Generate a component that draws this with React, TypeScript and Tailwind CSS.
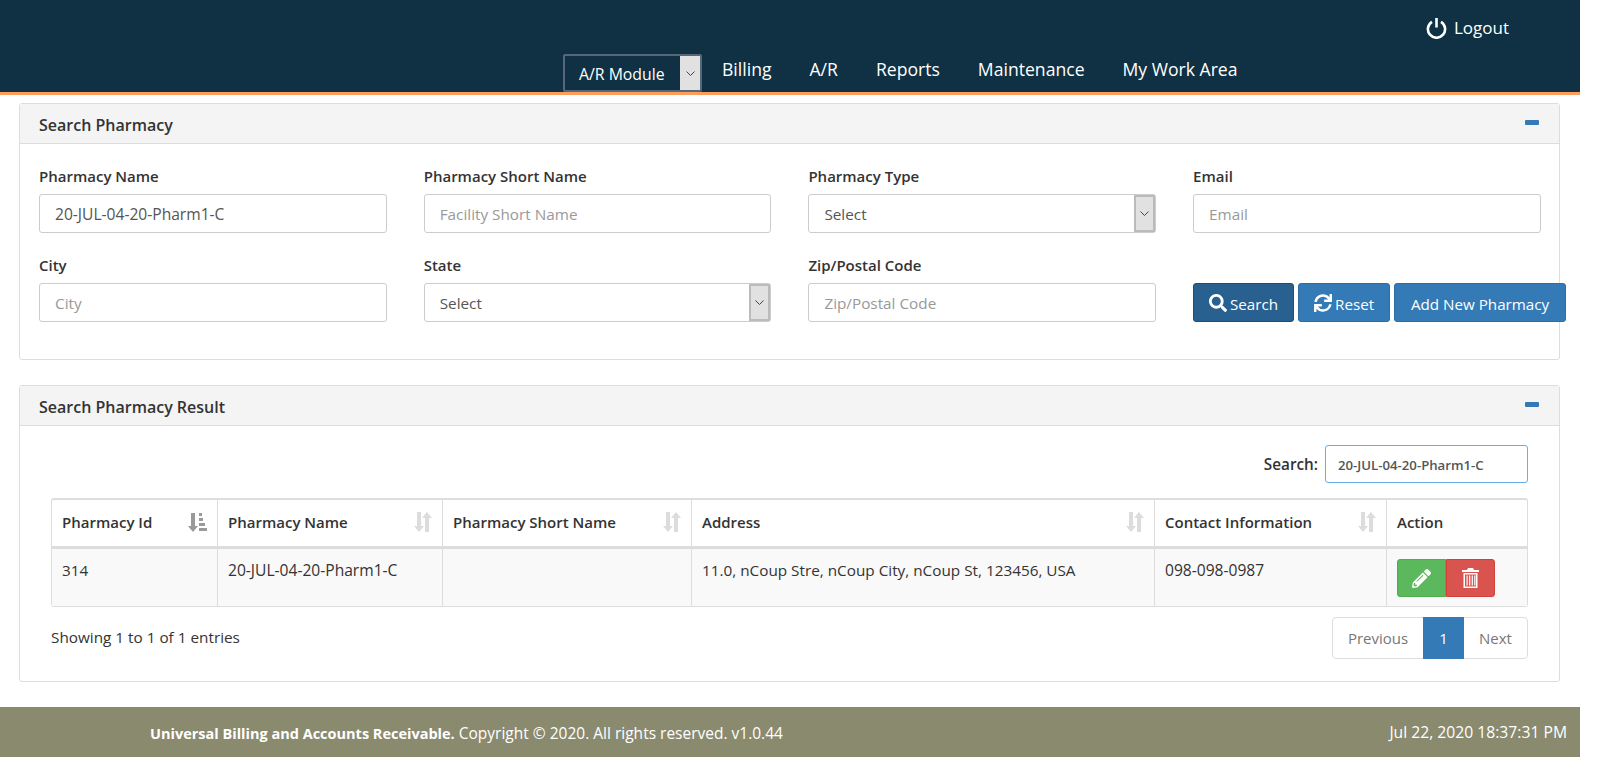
import React from 'react';
import { FaSearch, FaSync, FaPencilAlt } from 'react-icons/fa';

const SortIcon = () => (
  <svg width="18" height="20" viewBox="0 0 18 20" className="shrink-0 text-[#dcdcdc]" fill="currentColor">
    <path d="M3 0h4v14h3l-5 6-5-6h3z" />
    <path d="M11 20h4V6h3l-5-6-5 6h3z" />
  </svg>
);

const SortedIcon = () => (
  <svg width="19" height="19" viewBox="0 0 19 19" className="shrink-0 text-[#9a9a9a]" fill="currentColor">
    <path d="M3 0h4v13h3l-5 6-5-6h3z" />
    <path d="M11 0h3v3h-3zM11 5h4v3h-4zM11 10h6v3h-6zM11 15h8v3h-8z" />
  </svg>
);

const PowerIcon = () => (
  <svg width="21" height="21" viewBox="0 0 21 21" fill="none" stroke="white" strokeWidth="2.6">
    <path d="M6 3.8a8.6 8.6 0 1 0 9 0" />
    <path d="M10.5 0v9.5" />
  </svg>
);

const TrashIcon = () => (
  <svg width="17" height="20" viewBox="0 0 17 20" fill="white">
    <path d="M6 0h5l1 2h5v2H0V2h5z" />
    <path d="M1.5 5h14v15h-14zM3 6.5v12h11v-12z" fillRule="evenodd" />
    <path d="M4.5 7.5h1.2v10H4.5zM7.1 7.5h1.2v10H7.1zM9.7 7.5h1.2v10H9.7zM12.2 7.5h1.2v10h-1.2z" />
  </svg>
);

const Chevron = () => (
  <svg width="9" height="5" viewBox="0 0 9 5" fill="none" stroke="#444" strokeWidth="1">
    <path d="M0.5 0.5l4 4 4-4" />
  </svg>
);

const Field = ({ label, children }: { label: string; children: React.ReactNode }) => (
  <div className="w-[347.5px] shrink-0">
    <label className="block h-[20px] mb-[8px] text-[15px] leading-[20px] font-semibold text-[#333]">{label}</label>
    {children}
  </div>
);

const TextInput = ({ value, placeholder }: { value?: string; placeholder: string }) => (
  <input
    readOnly
    value={value ?? ''}
    placeholder={placeholder}
    className="block w-full h-[39px] px-[15px] pt-[1px] border border-[#ccc] rounded-[3px] bg-white text-[15.6px] text-[#555] placeholder:text-[15.3px] placeholder:text-[#999] outline-none"
  />
);

const SelectBox = () => (
  <div className="flex h-[39px] w-full border border-[#ccc] rounded-[3px] bg-white">
    <span className="flex-1 px-[15px] text-[15.3px] leading-[39px] text-[#555]">Select</span>
    <span className="flex w-[21px] items-center justify-center border-2 border-[#bbb] bg-[#e1e1e1]">
      <Chevron />
    </span>
  </div>
);

const Panel = ({ title, children }: { title: string; children: React.ReactNode }) => (
  <section className="mx-[19px] w-[1541px] border border-[#ddd] rounded-[3px] bg-white">
    <div className="flex h-[40px] items-center justify-between pl-[19px] pr-[20px] bg-[#f4f4f4] border-b border-[#ddd]">
      <h2 className="pt-[3px] text-[16px] font-semibold text-[#333]">{title}</h2>
      <span className="block w-[14px] h-[5px] mb-[3px] bg-[#337ab7] rounded-[1px]" />
    </div>
    {children}
  </section>
);

const columns = [
  { title: 'Pharmacy Id', width: 'w-[165px]', icon: <SortedIcon /> },
  { title: 'Pharmacy Name', width: 'w-[225px]', icon: <SortIcon /> },
  { title: 'Pharmacy Short Name', width: 'w-[249px]', icon: <SortIcon /> },
  { title: 'Address', width: 'w-[463px]', icon: <SortIcon /> },
  { title: 'Contact Information', width: 'w-[232px]', icon: <SortIcon /> },
  { title: 'Action', width: 'w-[141px]', icon: null },
];

export default function App() {
  return (
    <div className="w-[1580px] h-[757px] flex flex-col bg-white font-['Open_Sans',sans-serif] text-[15.3px] text-[#333]">
      <header className="h-[95px] shrink-0 bg-[#0f3143] border-b-[3px] border-[#ff9d5c] text-white">
        <div className="flex h-[54px] items-start justify-end pr-[71px] pt-[14px]">
          <a className="flex items-center gap-[7px] text-[17px] leading-[28px]">
            <PowerIcon />
            Logout
          </a>
        </div>
        <nav className="flex items-start pl-[563px]">
          <div className="flex h-[38px] w-[139px] border-2 border-[#56677a] rounded-[2px] bg-[#0f3143]">
            <span className="flex-1 pl-[14px] text-[15.8px] leading-[36px]">A/R Module</span>
            <span className="flex w-[20px] items-center justify-center bg-[#e1e1e1]">
              <Chevron />
            </span>
          </div>
          <div className="flex gap-[38px] pl-[20px] text-[17.6px] leading-[30px]">
            <a>Billing</a>
            <a>A/R</a>
            <a>Reports</a>
            <a>Maintenance</a>
            <a>My Work Area</a>
          </div>
        </nav>
      </header>

      <main className="flex-1 pt-[8px] flex flex-col gap-[25px]">
        <Panel title="Search Pharmacy">
          <div className="h-[215px] pl-[19px] pt-[22px]">
            <div className="flex gap-[37.2px]">
              <Field label="Pharmacy Name">
                <TextInput value="20-JUL-04-20-Pharm1-C" placeholder="Pharmacy Name" />
              </Field>
              <Field label="Pharmacy Short Name">
                <TextInput placeholder="Facility Short Name" />
              </Field>
              <Field label="Pharmacy Type">
                <SelectBox />
              </Field>
              <Field label="Email">
                <TextInput placeholder="Email" />
              </Field>
            </div>
            <div className="flex gap-[37.2px] mt-[22px]">
              <Field label="City">
                <TextInput placeholder="City" />
              </Field>
              <Field label="State">
                <SelectBox />
              </Field>
              <Field label="Zip/Postal Code">
                <TextInput placeholder="Zip/Postal Code" />
              </Field>
              <div className="flex shrink-0 gap-[4px] pt-[28px] text-white text-[15.2px]">
                <button className="flex h-[39px] w-[101px] items-center justify-center gap-[3px] rounded-[3px] bg-[#286090] border border-[#204d74]">
                  <FaSearch className="text-[18px]" />
                  <span className="pt-[3px]">Search</span>
                </button>
                <button className="flex h-[39px] w-[92px] items-center justify-center gap-[3px] rounded-[3px] bg-[#337ab7] border border-[#2e6da4]">
                  <FaSync className="text-[18px]" />
                  <span className="pt-[3px]">Reset</span>
                </button>
                <button className="h-[39px] w-[172px] pt-[3px] rounded-[3px] bg-[#337ab7] border border-[#2e6da4]">Add New Pharmacy</button>
              </div>
            </div>
          </div>
        </Panel>

        <Panel title="Search Pharmacy Result">
          <div className="h-[255px] pl-[31px] pr-[31px] pt-[19px]">
            <div className="flex h-[38px] items-center justify-end gap-[7px]">
              <span className="font-semibold">Search:</span>
              <input
                readOnly
                value="20-JUL-04-20-Pharm1-C"
                className="w-[203px] h-[38px] px-[12px] pt-[1px] border border-[#66afe9] rounded-[3px] text-[13.2px] font-semibold text-[#555] outline-none"
              />
            </div>
            <table className="mt-[15px] w-[1475px] table-fixed border-separate border-spacing-0 border-t-2 border-x border-b border-[#ddd] rounded-[3px]">
              <thead>
                <tr>
                  {columns.map((col, i) => (
                    <th
                      key={col.title}
                      className={`${col.width} h-[49px] px-[10px] pb-[2px] border-b-[3px] border-[#ddd] text-left text-[15px] font-semibold ${i > 0 ? 'border-l' : ''}`}
                    >
                      <div className="flex items-center justify-between">
                        <span>{col.title}</span>
                        {col.icon}
                      </div>
                    </th>
                  ))}
                </tr>
              </thead>
              <tbody>
                <tr className="bg-[#f9f9f9] align-top">
                  <td className="h-[57px] px-[10px] pt-[10px]">314</td>
                  <td className="px-[10px] pt-[10px] border-l border-[#ddd] text-[15.6px]">20-JUL-04-20-Pharm1-C</td>
                  <td className="border-l border-[#ddd]" />
                  <td className="px-[10px] pt-[10px] border-l border-[#ddd]">11.0, nCoup Stre, nCoup City, nCoup St, 123456, USA</td>
                  <td className="px-[10px] pt-[10px] border-l border-[#ddd] text-[15.6px]">098-098-0987</td>
                  <td className="pl-[10px] pt-[10px] border-l border-[#ddd]">
                    <div className="flex text-white">
                      <button className="flex h-[38px] w-[49px] items-center justify-center rounded-l-[3px] bg-[#5cb85c] border border-[#4cae4c]">
                        <FaPencilAlt className="text-[19px]" />
                      </button>
                      <button className="flex h-[38px] w-[49px] items-center justify-center rounded-r-[3px] bg-[#d9534f] border border-[#d43f3a]">
                        <TrashIcon />
                      </button>
                    </div>
                  </td>
                </tr>
              </tbody>
            </table>
            <div className="flex items-start justify-between mt-[10px]">
              <span className="pt-[9px]">Showing 1 to 1 of 1 entries</span>
              <div className="flex h-[42px] border border-[#ddd] rounded-[4px] text-[15px] text-[#777]">
                <span className="w-[90px] text-center leading-[40px]">Previous</span>
                <span className="w-[41px] -my-px h-[42px] bg-[#337ab7] text-white text-center leading-[42px]">1</span>
                <span className="w-[63px] text-center leading-[40px]">Next</span>
              </div>
            </div>
          </div>
        </Panel>
      </main>

      <footer className="flex h-[50px] shrink-0 items-center justify-between bg-[#8a8a6f] pl-[150px] pr-[13px] text-white">
        <p className="pt-[4px] text-[15.5px]">
          <strong className="text-[14.5px] font-bold">Universal Billing and Accounts Receivable.</strong> Copyright © 2020. All rights reserved. v1.0.44
        </p>
        <p className="pt-[1px] text-[15.7px]">Jul 22, 2020 18:37:31 PM</p>
      </footer>
    </div>
  );
}
